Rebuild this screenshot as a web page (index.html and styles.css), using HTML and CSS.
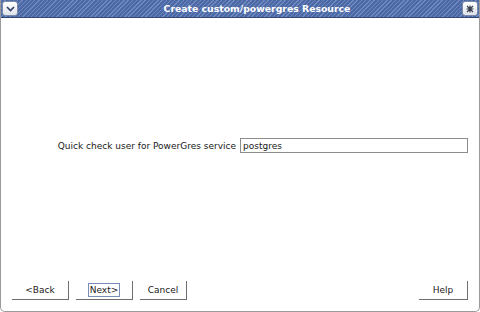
FILE: index.html
```html
<!DOCTYPE html>
<html lang="en">
<head>
    <meta charset="UTF-8">
    <title>Create custom/powergres Resource</title>
    <link rel="stylesheet" href="styles.css">
</head>
<body>
    <div class="window">
        <div class="titlebar">
            <span class="tb-btn">
                <svg width="9" height="6" viewBox="0 0 9 6"><path d="M1 1 L4.5 4.5 L8 1" fill="none" stroke="#2c3e66" stroke-width="1.6"/></svg>
            </span>
            <div class="title">Create custom/powergres Resource</div>
            <span class="tb-btn">
                <svg width="8" height="8" viewBox="0 0 8 8"><path d="M1 1 L7 7 M7 1 L1 7 M4 0.5 V7.5 M0.5 4 H7.5" fill="none" stroke="#3a4050" stroke-width="1.2"/></svg>
            </span>
        </div>
        <div class="content">
            <div class="form-area">
                <div class="field-row">
                    <label class="field-label" for="user">Quick check user for PowerGres service</label>
                    <input class="field-input" id="user" type="text" value="postgres">
                </div>
            </div>
            <div class="button-row">
                <button class="btn">&lt;Back</button>
                <button class="btn btn-focus"><span>Next&gt;</span></button>
                <button class="btn btn-small">Cancel</button>
                <div class="spacer"></div>
                <button class="btn btn-help">Help</button>
            </div>
        </div>
    </div>
</body>
</html>
```

FILE: styles.css
```css
*,::after,::before{
    padding: 0;
    margin: 0;
    box-sizing: border-box;
}

body{
    font-family: 'DejaVu Sans', sans-serif;
    background: white;
    width: 480px;
    height: 312px;
    overflow: hidden;
}

.window{
    width: 480px;
    height: 312px;
    display: flex;
    flex-direction: column;
    border: 1px solid #9a9a9a;
    border-top: none;
    border-radius: 0 0 5px 5px;
    overflow: hidden;
}

.titlebar{
    height: 18px;
    display: flex;
    align-items: center;
    padding: 0 2px 0 2px;
    background: repeating-linear-gradient(-45deg, #4c69a6 0px, #4c69a6 2px, #6d89c0 2px, #6d89c0 3px);
    border-bottom: 1px solid #33487a;
    margin: 0 -1px;
}

.tb-btn{
    width: 16px;
    height: 15px;
    border: 1px solid #7a8aa8;
    border-radius: 3px;
    background: linear-gradient(#ffffff, #dfe3ea);
    display: flex;
    align-items: center;
    justify-content: center;
}

.title{
    flex: 1;
    text-align: center;
    color: white;
    font-weight: bold;
    font-size: 9.3px;
    padding-left: 34px;
}

.content{
    flex: 1;
    display: flex;
    flex-direction: column;
}

.form-area{
    flex: 1;
    display: flex;
    align-items: center;
    justify-content: flex-end;
    padding: 0 11px 8px 0;
}

.field-row{
    display: flex;
    align-items: center;
    gap: 4px;
}

.field-label{
    font-size: 9px;
    color: #1a1a1a;
}

.field-input{
    width: 228px;
    height: 15px;
    border: 1px solid #8c8c8c;
    font-family: 'DejaVu Sans', sans-serif;
    font-size: 9px;
    padding: 0 2px;
    color: #1a1a1a;
    outline: none;
}

.button-row{
    display: flex;
    align-items: center;
    gap: 7px;
    padding: 0 11px 11px 11px;
}

.spacer{
    flex: 1;
}

.btn{
    width: 57px;
    height: 19px;
    background: white;
    border: none;
    border-right: 1px solid #6e6e6e;
    border-bottom: 1px solid #6e6e6e;
    font-family: 'DejaVu Sans', sans-serif;
    font-size: 9px;
    color: #1a1a1a;
    display: flex;
    align-items: center;
    justify-content: center;
}

.btn-small{
    width: 47px;
}

.btn-help{
    width: 49px;
}

.btn-focus span{
    border: 1px solid #7a8cb8;
    padding: 1px 1px;
}
```
